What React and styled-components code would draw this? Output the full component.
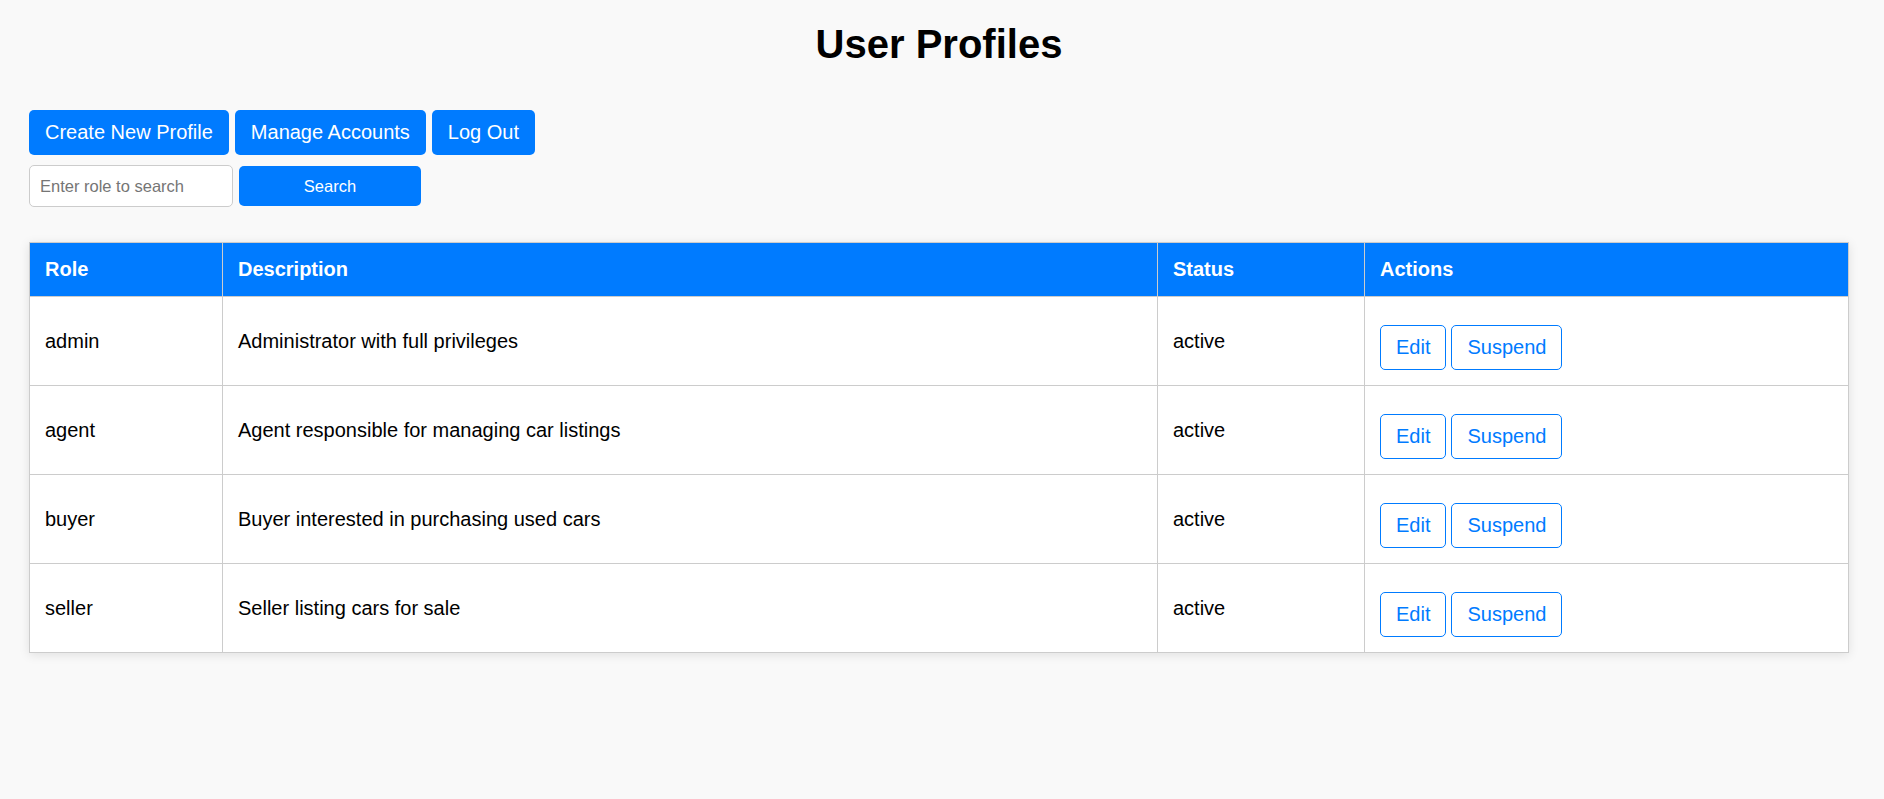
import styled, { createGlobalStyle } from 'styled-components'

const GlobalStyle = createGlobalStyle`
  body {
    margin: 0;
    background: #f9f9f9;
    font-family: "Liberation Sans", Arial, sans-serif;
    color: #000;
  }
`

const Page = styled.div`
  padding: 0 35px 40px 29px;
`

const Title = styled.h1`
  margin: 22px 0 43px;
  text-align: center;
  font-size: 40px;
  font-weight: bold;
`

const Toolbar = styled.div`
  display: flex;
  gap: 6px;
  margin-bottom: 10px;
`

const PrimaryButton = styled.button`
  font-family: inherit;
  font-size: 20px;
  line-height: 23px;
  padding: 11px 16px;
  border: none;
  border-radius: 5px;
  background: #007bff;
  color: #fff;
  cursor: pointer;
`

const SearchRow = styled.div`
  display: flex;
  gap: 6px;
  margin-bottom: 35px;
`

const SearchInput = styled.input`
  box-sizing: border-box;
  width: 204px;
  height: 42px;
  padding: 0 10px;
  border: 1px solid #ccc;
  border-radius: 5px;
  background: #fff;
  font-family: inherit;
  font-size: 16.5px;
  &::placeholder {
    color: #757575;
  }
`

const SearchButton = styled.button`
  width: 182px;
  height: 40px;
  margin-top: 1px;
  border: none;
  border-radius: 5px;
  background: #007bff;
  color: #fff;
  font-family: inherit;
  font-size: 16.5px;
  cursor: pointer;
`

const Table = styled.table`
  width: 100%;
  table-layout: fixed;
  border-collapse: collapse;
  background: #fff;
  box-shadow: 0 2px 10px rgba(0, 0, 0, 0.1);
  font-size: 20px;
  line-height: 23px;
`

const Th = styled.th`
  padding: 15px;
  border: 1px solid #ccc;
  background: #007bff;
  color: #fff;
  text-align: left;
  font-weight: bold;
`

const Td = styled.td`
  padding: 15px;
  border: 1px solid #ccc;
  vertical-align: middle;
`

const ActionsCell = styled(Td)`
  padding-top: 28px;
`

const Actions = styled.div`
  display: flex;
  gap: 5px;
`

const OutlineButton = styled.button`
  font-family: inherit;
  font-size: 20px;
  line-height: 23px;
  padding: 10px 15px;
  border: 1px solid #007bff;
  border-radius: 5px;
  background: #fff;
  color: #007bff;
  cursor: pointer;
`

const profiles = [
  { role: 'admin', description: 'Administrator with full privileges', status: 'active' },
  { role: 'agent', description: 'Agent responsible for managing car listings', status: 'active' },
  { role: 'buyer', description: 'Buyer interested in purchasing used cars', status: 'active' },
  { role: 'seller', description: 'Seller listing cars for sale', status: 'active' },
]

const App = () => {
  return (
    <>
      <GlobalStyle />
      <Page>
        <Title>User Profiles</Title>
        <Toolbar>
          <PrimaryButton>Create New Profile</PrimaryButton>
          <PrimaryButton>Manage Accounts</PrimaryButton>
          <PrimaryButton>Log Out</PrimaryButton>
        </Toolbar>
        <SearchRow>
          <SearchInput placeholder="Enter role to search" />
          <SearchButton>Search</SearchButton>
        </SearchRow>
        <Table>
          <colgroup>
            <col style={{ width: '193px' }} />
            <col style={{ width: '935px' }} />
            <col style={{ width: '207px' }} />
            <col />
          </colgroup>
          <thead>
            <tr>
              <Th>Role</Th>
              <Th>Description</Th>
              <Th>Status</Th>
              <Th>Actions</Th>
            </tr>
          </thead>
          <tbody>
            {profiles.map((p) => (
              <tr key={p.role}>
                <Td>{p.role}</Td>
                <Td>{p.description}</Td>
                <Td>{p.status}</Td>
                <ActionsCell>
                  <Actions>
                    <OutlineButton>Edit</OutlineButton>
                    <OutlineButton>Suspend</OutlineButton>
                  </Actions>
                </ActionsCell>
              </tr>
            ))}
          </tbody>
        </Table>
      </Page>
    </>
  )
}

export default App
